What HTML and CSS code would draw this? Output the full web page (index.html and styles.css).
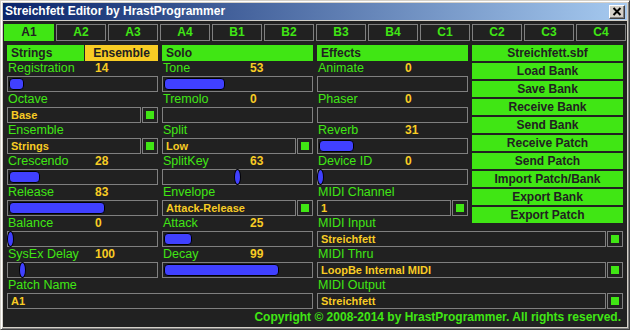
FILE: index.html
```html
<!DOCTYPE html>
<html lang="en">
<head>
  <meta charset="UTF-8" />
  <title>Streichfett Editor</title>
  <link rel="stylesheet" href="styles.css">
</head>
<body>
  <div class="window">
    <div class="titlebar">
      <span class="title">Streichfett Editor by HrastProgrammer</span>
      <span class="close">
        <svg width="10" height="9" viewBox="0 0 10 9"><path d="M1.5 1 L8.5 8 M8.5 1 L1.5 8" stroke="#000" stroke-width="2" /></svg>
      </span>
    </div>

    <div class="client">
      <div class="tabs">
        <div class="tab active">A1</div>
        <div class="tab">A2</div>
        <div class="tab">A3</div>
        <div class="tab">A4</div>
        <div class="tab">B1</div>
        <div class="tab">B2</div>
        <div class="tab">B3</div>
        <div class="tab">B4</div>
        <div class="tab">C1</div>
        <div class="tab">C2</div>
        <div class="tab">C3</div>
        <div class="tab">C4</div>
      </div>

      <div class="panel">
        <!-- headers -->
        <div class="hdr-split">
          <div class="hdr">Strings</div>
          <div class="hdr alt">Ensemble</div>
        </div>
        <div class="hdr">Solo</div>
        <div class="hdr">Effects</div>

        <div class="buttons">
          <div class="btn">Streichfett.sbf</div>
          <div class="btn">Load Bank</div>
          <div class="btn">Save Bank</div>
          <div class="btn">Receive Bank</div>
          <div class="btn">Send Bank</div>
          <div class="btn">Receive Patch</div>
          <div class="btn">Send Patch</div>
          <div class="btn">Import Patch/Bank</div>
          <div class="btn">Export Bank</div>
          <div class="btn">Export Patch</div>
        </div>

        <!-- row 2 -->
        <div class="field">
          <div class="lbl"><span class="name">Registration</span><span class="val">14</span></div>
          <div class="box"><div class="bar" style="width: 15px"></div></div>
        </div>
        <div class="field">
          <div class="lbl"><span class="name">Tone</span><span class="val">53</span></div>
          <div class="box"><div class="bar" style="width: 61px"></div></div>
        </div>
        <div class="field">
          <div class="lbl"><span class="name">Animate</span><span class="val">0</span></div>
          <div class="box"></div>
        </div>

        <!-- row 3 -->
        <div class="field">
          <div class="lbl"><span class="name">Octave</span></div>
          <div class="sel-row"><div class="box sel">Base</div><div class="check"><div class="dot"></div></div></div>
        </div>
        <div class="field">
          <div class="lbl"><span class="name">Tremolo</span><span class="val">0</span></div>
          <div class="box"></div>
        </div>
        <div class="field">
          <div class="lbl"><span class="name">Phaser</span><span class="val">0</span></div>
          <div class="box"></div>
        </div>

        <!-- row 4 -->
        <div class="field">
          <div class="lbl"><span class="name">Ensemble</span></div>
          <div class="sel-row"><div class="box sel">Strings</div><div class="check"><div class="dot"></div></div></div>
        </div>
        <div class="field">
          <div class="lbl"><span class="name">Split</span></div>
          <div class="sel-row"><div class="box sel">Low</div><div class="check"><div class="dot"></div></div></div>
        </div>
        <div class="field">
          <div class="lbl"><span class="name">Reverb</span><span class="val">31</span></div>
          <div class="box"><div class="bar" style="width: 35px"></div></div>
        </div>

        <!-- row 5 -->
        <div class="field">
          <div class="lbl"><span class="name">Crescendo</span><span class="val">28</span></div>
          <div class="box"><div class="bar" style="width: 31px"></div></div>
        </div>
        <div class="field">
          <div class="lbl"><span class="name">SplitKey</span><span class="val">63</span></div>
          <div class="box"><div class="knob" style="margin-left: 71px"></div></div>
        </div>
        <div class="field">
          <div class="lbl"><span class="name">Device ID</span><span class="val">0</span></div>
          <div class="box"><div class="knob" style="margin-left: -1px"></div></div>
        </div>

        <!-- row 6 -->
        <div class="field">
          <div class="lbl"><span class="name">Release</span><span class="val">83</span></div>
          <div class="box"><div class="bar" style="width: 96px"></div></div>
        </div>
        <div class="field">
          <div class="lbl"><span class="name">Envelope</span></div>
          <div class="sel-row"><div class="box sel">Attack-Release</div><div class="check"><div class="dot"></div></div></div>
        </div>
        <div class="field">
          <div class="lbl"><span class="name">MIDI Channel</span></div>
          <div class="sel-row"><div class="box sel">1</div><div class="check"><div class="dot"></div></div></div>
        </div>

        <!-- row 7 -->
        <div class="field">
          <div class="lbl"><span class="name">Balance</span><span class="val">0</span></div>
          <div class="box"><div class="knob" style="margin-left: -1px"></div></div>
        </div>
        <div class="field">
          <div class="lbl"><span class="name">Attack</span><span class="val">25</span></div>
          <div class="box"><div class="bar" style="width: 28px"></div></div>
        </div>
        <div class="field wide">
          <div class="lbl"><span class="name">MIDI Input</span></div>
          <div class="sel-row"><div class="box sel">Streichfett</div><div class="check"><div class="dot"></div></div></div>
        </div>

        <!-- row 8 -->
        <div class="field">
          <div class="lbl"><span class="name">SysEx Delay</span><span class="val">100</span></div>
          <div class="box"><div class="knob" style="margin-left: 11px"></div></div>
        </div>
        <div class="field">
          <div class="lbl"><span class="name">Decay</span><span class="val">99</span></div>
          <div class="box"><div class="bar" style="width: 115px"></div></div>
        </div>
        <div class="field wide">
          <div class="lbl"><span class="name">MIDI Thru</span></div>
          <div class="sel-row"><div class="box sel">LoopBe Internal MIDI</div><div class="check"><div class="dot"></div></div></div>
        </div>

        <!-- row 9 -->
        <div class="field wide">
          <div class="lbl"><span class="name">Patch Name</span></div>
          <div class="box sel">A1</div>
        </div>
        <div class="field wide">
          <div class="lbl"><span class="name">MIDI Output</span></div>
          <div class="sel-row"><div class="box sel">Streichfett</div><div class="check"><div class="dot"></div></div></div>
        </div>
      </div>

      <div class="copyright">Copyright © 2008-2014 by HrastProgrammer. All rights reserved.</div>
    </div>
  </div>
</body>
</html>
```

FILE: styles.css
```css
body { margin: 0; background: #d4d0c8; font-family: "Liberation Sans", Arial, sans-serif; }

.window {
  width: 630px; height: 330px; box-sizing: border-box;
  border: 1px solid; border-color: #d4d0c8 #404040 #404040 #d4d0c8;
  box-shadow: inset 1px 1px #fff, inset -1px -1px #808080;
  padding: 2px; background: #d4d0c8;
  display: flex; flex-direction: column; gap: 1px;
}

.titlebar {
  height: 17px; display: flex; align-items: center; padding: 0 2px;
  background: linear-gradient(to right, #0a246a, #a6caf0);
}
.title { color: #fff; font-weight: bold; font-size: 12px; line-height: 17px; }
.close {
  margin-left: auto; width: 16px; height: 14px; box-sizing: border-box;
  background: #d4d0c8; border: 1px solid; border-color: #fff #404040 #404040 #fff;
  box-shadow: inset -1px -1px #808080;
  display: flex; align-items: center; justify-content: center;
}
.close svg { display: block; }

.client { flex: 1; background: #212121; padding: 3px 0 0 1px; display: flex; flex-direction: column; }

.tabs { display: flex; gap: 2px; }
.tab {
  width: 50px; height: 17px; box-sizing: border-box; border: 1px solid #808080;
  color: #40e614; font-weight: bold; font-size: 12px; line-height: 15px; text-align: center;
}
.tab.active { background: #40e614; border-color: #40e614; color: #212121; }

.panel {
  margin: 4px 0 0 3px;
  display: grid; grid-template-columns: repeat(4, 151px); column-gap: 4px;
  grid-template-rows: 16px repeat(8, 31px);
}

.hdr {
  background: #40e614; color: #212121; font-weight: bold; font-size: 12px;
  line-height: 16px; padding-left: 4px;
}
.hdr-split { display: flex; gap: 1px; }
.hdr-split .hdr { flex: 1; }
.hdr.alt { background: #f8cc24; text-align: center; padding-left: 0; }

.buttons { grid-column: 4; grid-row: 1 / 7; align-self: start; display: flex; flex-direction: column; gap: 2px; }
.btn {
  height: 16px; background: #40e614; color: #212121; font-weight: bold; font-size: 12px;
  line-height: 16px; text-align: center;
}

.field { display: flex; flex-direction: column; }
.field.wide { grid-column: span 2; }
.lbl { height: 15px; display: flex; font-size: 12.5px; line-height: 15px; }
.name { width: 87px; padding-left: 1px; color: #40e614; }
.val { color: #f8cc24; font-weight: bold; font-size: 12px; }

.box { height: 16px; box-sizing: border-box; border: 1px solid #808080; }
.sel-row { display: flex; gap: 1px; }
.sel-row .sel { flex: 1; }
.sel { color: #f8cc24; font-weight: bold; font-size: 11px; line-height: 14px; padding-left: 3px; }
.check { width: 16px; height: 16px; box-sizing: border-box; border: 1px solid #808080; padding: 3px; }
.dot { width: 8px; height: 8px; background: #40e614; }

.bar {
  height: 12px; margin: 1px; box-sizing: border-box;
  background: #4040ff; border: 1px solid #000; border-radius: 4px;
}
.knob {
  width: 7px; height: 16px; margin-top: -1px; box-sizing: border-box;
  background: #4040ff; border: 1px solid #000; border-radius: 50%;
}

.copyright {
  margin-top: 1px; padding-right: 6px; text-align: right;
  color: #40e614; font-weight: bold; font-size: 12px; line-height: 15px;
}
```
